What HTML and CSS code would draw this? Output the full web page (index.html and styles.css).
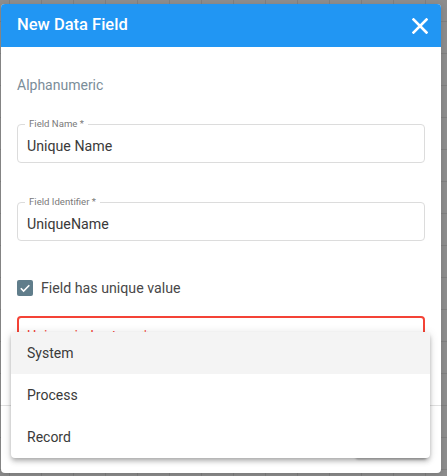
FILE: index.html
```html
<!DOCTYPE html>
<html>
<head>
<meta charset="utf-8">
<link rel="stylesheet" href="styles.css">
</head>
<body>
<div class="backdrop">
  <div class="dialog">
    <div class="header">
      <span class="title">New Data Field</span>
      <svg class="close" width="16" height="16" viewBox="0 0 16 16"><path d="M1.5 1.5L14.5 14.5M14.5 1.5L1.5 14.5" stroke="#fff" stroke-width="2.6" stroke-linecap="square"/></svg>
    </div>
    <div class="content">
      <div class="type">Alphanumeric</div>
      <div class="field">
        <span class="flabel">Field Name *</span>
        <span class="fvalue">Unique Name</span>
      </div>
      <div class="field">
        <span class="flabel">Field Identifier *</span>
        <span class="fvalue">UniqueName</span>
      </div>
      <label class="check">
        <span class="box"><svg width="16" height="16" viewBox="0 0 16 16"><path d="M3.8 8.2L6.6 11L12.3 5.3" fill="none" stroke="#fff" stroke-width="1.6"/></svg></span>
        <span class="ctext">Field has unique value</span>
      </label>
      <div class="field error">
        <span class="fvalue red">Unique index type *</span>
      </div>
    </div>
    <div class="footer">
      <span class="btn"></span>
    </div>
    <div class="menu">
      <div class="item active">System</div>
      <div class="item">Process</div>
      <div class="item">Record</div>
    </div>
  </div>
</div>
</body>
</html>
```
FILE: styles.css
```css
html, body {
  margin: 0;
  padding: 0;
}
body {
  width: 447px;
  height: 476px;
  overflow: hidden;
  font-family: Roboto, "Liberation Sans", sans-serif;
  background-color: #8d8d8d;
  background-image:
    linear-gradient(to right, rgba(0,0,0,0.09) 1px, transparent 1px),
    linear-gradient(to bottom, rgba(0,0,0,0.09) 1px, transparent 1px);
  background-size: 32px 32px;
  background-position: 9px 21px;
}
.backdrop {
  padding: 4px 6px 3px 1px;
}
.dialog {
  position: relative;
  width: 440px;
  height: 469px;
  background: #fff;
  border-radius: 4px;
  display: flex;
  flex-direction: column;
  box-shadow: 0 2px 6px rgba(0,0,0,0.15);
}
.header {
  height: 43px;
  background: #2196f3;
  border-radius: 4px 4px 0 0;
  display: flex;
  align-items: center;
  justify-content: space-between;
  padding: 0 13px 0 16px;
  flex: none;
}
.title {
  color: #fff;
  font-size: 16.5px;
  font-weight: 500;
  position: relative;
  top: -1px;
}
.close {
  display: block;
}
.content {
  flex: 1;
  padding: 28px 16px 0 16px;
  display: flex;
  flex-direction: column;
}
.type {
  font-size: 14px;
  line-height: 20px;
  color: #7b8d99;
}
.field {
  position: relative;
  height: 39px;
  box-sizing: border-box;
  border: 1px solid #dcdcdc;
  border-radius: 4px;
  margin-top: 29px;
  display: flex;
  align-items: center;
  padding: 5px 9px 0 9px;
}
.field + .field {
  margin-top: 39px;
}
.flabel {
  position: absolute;
  left: 7px;
  top: -7px;
  padding: 0 4px;
  background: #fff;
  font-size: 9.6px;
  line-height: 12px;
  color: #7a7a7a;
}
.fvalue {
  font-size: 14.2px;
  color: #3a3a3a;
}
.check {
  display: flex;
  align-items: center;
  margin-top: 39px;
  height: 16px;
}
.box {
  width: 16px;
  height: 16px;
  border-radius: 2px;
  background: #607d8b;
  flex: none;
}
.box svg {
  display: block;
}
.ctext {
  margin-left: 8px;
  font-size: 14.2px;
  color: #484848;
}
.field.error {
  margin-top: 20px;
  border: 2px solid #f44336;
  padding: 10px 8px 0 8px;
  align-items: flex-start;
}
.red {
  color: #f44336;
}
.footer {
  flex: none;
  height: 68px;
  border-top: 1px solid #e0e0e0;
  box-sizing: border-box;
  display: flex;
  justify-content: flex-end;
  align-items: flex-start;
  padding: 16px 14px 0 0;
}
.btn {
  width: 72px;
  height: 36px;
  border-radius: 4px;
  background: #e8e8e8;
  box-shadow: 0 2px 2px rgba(0,0,0,0.2);
}
.menu {
  position: absolute;
  left: 10px;
  top: 328px;
  width: 419px;
  background: #fff;
  border-radius: 4px;
  box-shadow: 0 2px 4px -1px rgba(0,0,0,0.2), 0 4px 5px 0 rgba(0,0,0,0.14), 0 1px 10px 0 rgba(0,0,0,0.12);
  overflow: hidden;
}
.item {
  height: 42px;
  display: flex;
  align-items: center;
  padding-left: 16px;
  font-size: 14px;
  color: #3a3a3a;
}
.item.active {
  background: #f4f4f4;
}
```
